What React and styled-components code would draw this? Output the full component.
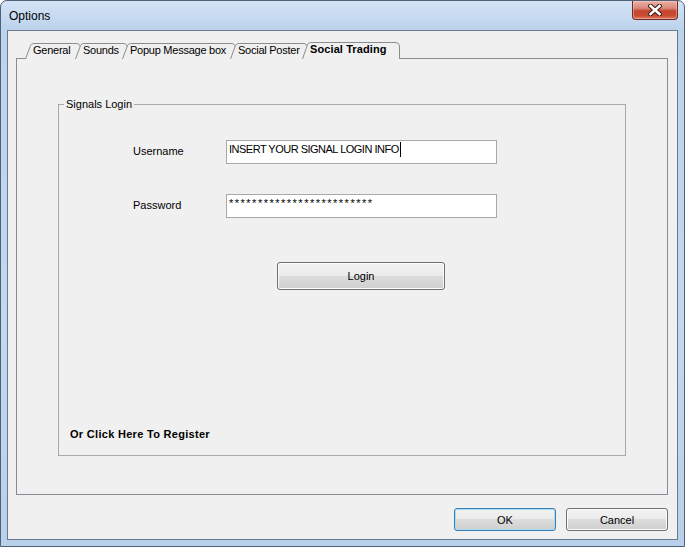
import styled, { createGlobalStyle } from 'styled-components';

const GlobalStyle = createGlobalStyle`
  html, body {
    margin: 0;
    padding: 0;
    background: #ffffff;
  }
  body {
    font-family: "Liberation Sans", Arial, sans-serif;
    font-size: 11px;
    color: #000;
  }
  * {
    box-sizing: border-box;
  }
`;

const Window = styled.div`
  width: 685px;
  height: 547px;
  border: 1px solid #4f6177;
  border-radius: 7px 7px 0 0;
  background: linear-gradient(to bottom, #d3e3f5 0%, #bcd3ec 29px, #c4d8ef 60%, #b9d0ea 100%);
  padding: 0 6px 6px;
  display: flex;
  flex-direction: column;
`;

const TitleBar = styled.div`
  height: 29px;
  display: flex;
  align-items: center;
  padding-left: 2px;
`;

const Title = styled.span`
  font-size: 12px;
  margin-top: 1px;
`;

const CloseButton = styled.button`
  margin-left: auto;
  align-self: flex-start;
  width: 46px;
  height: 19px;
  padding: 0;
  border: 1px solid #6e2b22;
  border-top: none;
  border-radius: 0 0 4px 4px;
  background: linear-gradient(to bottom, #eab1a5 0%, #d8887a 40%, #c4462f 55%, #c84a32 80%, #de7a5f 100%);
  box-shadow: inset 0 0 0 1px rgba(255, 210, 200, 0.45);
  display: flex;
  align-items: center;
  justify-content: center;
`;

const Client = styled.div`
  flex: 1;
  border: 1px solid #687a91;
  background: #f0f0f0;
  padding: 11px 9px 8px 8px;
  display: flex;
  flex-direction: column;
`;

const TabStrip = styled.div`
  height: 17px;
  display: flex;
  align-items: flex-end;
  padding-left: 9px;
  margin-bottom: -1px;
  position: relative;
  z-index: 1;
`;

const TabItem = styled.div`
  position: relative;
  width: ${(p) => p.$w}px;
  height: ${(p) => (p.$active ? 17 : 16)}px;
  margin-right: ${(p) => (p.$active ? 0 : -6)}px;
  flex-shrink: 0;
`;

const TabShape = styled.svg`
  position: absolute;
  left: 0;
  top: 0;
`;

const TabLabel = styled.span`
  position: relative;
  display: block;
  padding-left: 8px;
  line-height: 15px;
  white-space: nowrap;
  letter-spacing: ${(p) => (p.$active ? 0.1 : -0.25)}px;
  font-weight: ${(p) => (p.$active ? 'bold' : 'normal')};
`;

const Panel = styled.div`
  height: 437px;
  border: 1px solid #898c95;
  background: #f0f0f0;
  padding: 39px 0 0 41px;
`;

const GroupBox = styled.fieldset`
  width: 568px;
  height: 358px;
  margin: 0;
  padding: 0;
  min-width: 0;
  border: 1px solid #a9a9a9;
  display: flex;
  flex-direction: column;
`;

const Legend = styled.legend`
  margin-left: 5px;
  padding: 0 2px;
  line-height: 13px;
`;

const GroupBody = styled.div`
  flex: 1;
  display: flex;
  flex-direction: column;
  padding: 29px 0 14px 0;
`;

const FormGrid = styled.div`
  display: grid;
  grid-template-columns: 93px 271px;
  row-gap: 30px;
  align-items: center;
  padding-left: 74px;
`;

const FieldLabel = styled.span`
  margin-top: -3px;
`;

const TextBox = styled.div`
  height: 24px;
  border: 1px solid #a8a8a8;
  background: #ffffff;
  padding: 2px 0 0 2px;
  display: flex;
  align-items: flex-start;
  white-space: nowrap;
  letter-spacing: ${(p) => p.$spacing || 0}px;
`;

const Caret = styled.span`
  display: inline-block;
  width: 1px;
  height: 15px;
  margin-top: -1px;
  margin-left: 1px;
  background: #000;
`;

const LoginRow = styled.div`
  padding-left: 218px;
  margin-top: 44px;
`;

const WinButton = styled.button`
  width: ${(p) => p.$w}px;
  height: ${(p) => p.$h}px;
  padding: 0;
  font-family: "Liberation Sans", Arial, sans-serif;
  font-size: 11px;
  color: #000;
  border: 1px solid ${(p) => (p.$default ? '#3c7fb1' : '#707070')};
  border-radius: 3px;
  background: linear-gradient(to bottom, #f2f2f2 0%, #ebebeb 50%, #dddddd 50%, #cfcfcf 100%);
  box-shadow: inset 0 0 0 1px ${(p) => (p.$default ? '#a8dcf5' : '#fbfbfb')};
`;

const RegisterLink = styled.span`
  margin-top: auto;
  padding-left: 11px;
  font-weight: bold;
  line-height: 13px;
  letter-spacing: 0.3px;
  cursor: pointer;
`;

const Footer = styled.div`
  margin-top: 13px;
  display: flex;
  justify-content: flex-end;
  gap: 10px;
`;

const tabs = [
  { label: 'General', w: 56 },
  { label: 'Sounds', w: 53 },
  { label: 'Popup Message box', w: 114 },
  { label: 'Social Poster', w: 78 },
  { label: 'Social Trading', w: 98, active: true },
];

function Tab({ label, w, active }) {
  const h = active ? 17 : 16;
  const outline = `M0.5,${h} L5.5,2.5 Q6.5,0.5 8.5,0.5 L${w - 5},0.5 Q${w - 0.5},0.5 ${w - 0.5},5 L${w - 0.5},${h}`;
  return (
    <TabItem $w={w} $active={active}>
      <TabShape width={w} height={h}>
        <path d={outline + ' Z'} fill="#f0f0f0" />
        <path d={outline} fill="none" stroke="#8c8c8c" strokeWidth="1" />
      </TabShape>
      <TabLabel $active={active}>{label}</TabLabel>
    </TabItem>
  );
}

function CloseGlyph() {
  return (
    <svg width="14" height="12" viewBox="0 0 14 12">
      <path d="M2.5,2 L11.5,10 M11.5,2 L2.5,10" stroke="#3d1a14" strokeWidth="4.6" strokeLinecap="square" />
      <path d="M2.5,2 L11.5,10 M11.5,2 L2.5,10" stroke="#ffffff" strokeWidth="2.6" strokeLinecap="square" />
    </svg>
  );
}

export default function App() {
  return (
    <>
      <GlobalStyle />
      <Window>
        <TitleBar>
          <Title>Options</Title>
          <CloseButton aria-label="Close">
            <CloseGlyph />
          </CloseButton>
        </TitleBar>
        <Client>
          <TabStrip>
            {tabs.map((t) => (
              <Tab key={t.label} {...t} />
            ))}
          </TabStrip>
          <Panel>
            <GroupBox>
              <Legend>Signals Login</Legend>
              <GroupBody>
                <FormGrid>
                  <FieldLabel>Username</FieldLabel>
                  <TextBox $spacing={-0.5}>
                    INSERT YOUR SIGNAL LOGIN INFO
                    <Caret />
                  </TextBox>
                  <FieldLabel>Password</FieldLabel>
                  <TextBox $spacing={1.5}>*************************</TextBox>
                </FormGrid>
                <LoginRow>
                  <WinButton $w={168} $h={28}>Login</WinButton>
                </LoginRow>
                <RegisterLink>Or Click Here To Register</RegisterLink>
              </GroupBody>
            </GroupBox>
          </Panel>
          <Footer>
            <WinButton $w={102} $h={23} $default>OK</WinButton>
            <WinButton $w={102} $h={23}>Cancel</WinButton>
          </Footer>
        </Client>
      </Window>
    </>
  );
}
